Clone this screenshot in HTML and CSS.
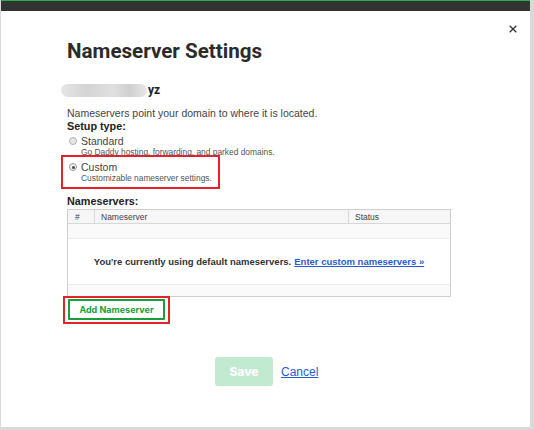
FILE: index.html
```html
<!DOCTYPE html>
<html>
<head>
<meta charset="utf-8">
<link rel="stylesheet" href="styles.css">
</head>
<body>
<div class="page">
  <div class="topbar"></div>
  <div class="modal">
    <button class="close" aria-label="Close">
      <svg width="8" height="8" viewBox="0 0 8 8"><path d="M0.7 0.7L7.3 7.3M7.3 0.7L0.7 7.3" stroke="#333" stroke-width="1.3" fill="none"/></svg>
    </button>
    <h1 class="title">Nameserver Settings</h1>
    <div class="domain"><span class="blur"></span><span class="tld">yz</span></div>
    <p class="intro">Nameservers point your domain to where it is located.</p>
    <div class="label">Setup type:</div>
    <div class="option">
      <div class="opt-row"><span class="radio"></span><span class="opt-name">Standard</span></div>
      <div class="opt-desc">Go Daddy hosting, forwarding, and parked domains.</div>
    </div>
    <div class="option highlight">
      <div class="opt-row"><span class="radio checked"></span><span class="opt-name">Custom</span></div>
      <div class="opt-desc">Customizable nameserver settings.</div>
    </div>
    <div class="label ns-label">Nameservers:</div>
    <div class="table">
      <div class="thead">
        <div class="c-num">#</div>
        <div class="c-ns">Nameserver</div>
        <div class="c-status">Status</div>
      </div>
      <div class="band"></div>
      <div class="empty">You're currently using default nameservers. <a href="#">Enter custom nameservers »</a></div>
      <div class="band bottom"></div>
    </div>
    <div class="add-wrap"><button class="add">Add Nameserver</button></div>
    <div class="actions">
      <button class="save">Save</button>
      <a href="#" class="cancel">Cancel</a>
    </div>
  </div>
</div>
</body>
</html>
```
FILE: styles.css
```css
html, body {
  margin: 0;
  padding: 0;
}
body {
  background: #d9d9d9;
  font-family: "Liberation Sans", Arial, sans-serif;
  color: #333;
}
.page {
  width: 529px;
  height: 427px;
  background: #fff;
  margin-left: 1px;
  display: flex;
  flex-direction: column;
}
.topbar {
  height: 10px;
  background: #333;
  border-top: 1px solid #27b04a;
  flex: none;
}
.modal {
  position: relative;
  flex: 1;
  padding: 25px 0 0 66px;
}
.close {
  position: absolute;
  top: 14px;
  right: 13px;
  border: 0;
  background: none;
  padding: 0;
  width: 8px;
  height: 8px;
  display: flex;
}
.title {
  margin: 0;
  font-family: Roboto, "Open Sans", sans-serif;
  font-weight: 700;
  font-size: 20.6px;
  color: #2b2b2b;
  line-height: 30px;
}
.domain {
  margin-top: 15px;
  display: flex;
  align-items: center;
  height: 18px;
  margin-left: -6px;
}
.blur {
  display: inline-block;
  width: 86px;
  height: 13px;
  border-radius: 7px;
  background: linear-gradient(90deg, #e6e6e6, #d4d4d4 30%, #e0e0e0 60%, #cfcfcf 80%, #e8e8e8);
}
.tld {
  font-family: Roboto, sans-serif;
  font-weight: 700;
  font-size: 12px;
  color: #222;
  margin-left: 1px;
}
.intro {
  margin: 8px 0 0;
  font-size: 10.5px;
  line-height: 12px;
  color: #444;
}
.label {
  font-weight: 700;
  font-size: 10.8px;
  line-height: 14px;
  color: #222;
}
.option {
  margin-top: 1px;
}
.opt-row {
  display: flex;
  align-items: center;
  height: 14px;
  padding-left: 2px;
}
.radio {
  width: 6px;
  height: 6px;
  border: 1px solid #b0b0b0;
  border-radius: 50%;
  background: #e6e6e6;
  margin-right: 4px;
  display: flex;
  align-items: center;
  justify-content: center;
}
.radio.checked {
  background: #f2f2f2;
  border-color: #999;
}
.radio.checked::after {
  content: "";
  width: 3px;
  height: 3px;
  border-radius: 50%;
  background: #444;
}
.opt-name {
  font-size: 10.5px;
  line-height: 12px;
  color: #444;
}
.opt-desc {
  font-size: 8.4px;
  color: #555;
  padding-left: 14px;
  line-height: 9px;
}
.option.highlight {
  margin: -2px 0 0 -6px;
  width: 151px;
  border: 2px solid #e5212a;
  padding: 3px 0 4px 4px;
}
.ns-label {
  margin-top: 6px;
  line-height: 13px;
}
.table {
  width: 382px;
  border: 1px solid #cfcfcf;
  margin-top: 1px;
}
.thead {
  display: flex;
  height: 14px;
  background: #f6f6f6;
  border-bottom: 1px solid #d8d8d8;
  font-size: 8.5px;
  line-height: 14px;
  color: #444;
  box-sizing: border-box;
}
.c-num {
  width: 27px;
  padding-left: 7px;
  box-sizing: border-box;
  border-right: 1px solid #d8d8d8;
}
.c-ns {
  width: 254px;
  padding-left: 6px;
  box-sizing: border-box;
  border-right: 1px solid #d8d8d8;
}
.c-status {
  padding-left: 6px;
}
.band {
  height: 14px;
  background: #fafafa;
  border-bottom: 1px solid #eee;
}
.band.bottom {
  border-bottom: 0;
  border-top: 1px solid #eee;
  height: 11px;
}
.empty {
  height: 45px;
  display: flex;
  align-items: center;
  justify-content: center;
  font-size: 9.5px;
  color: #333;
  font-weight: 600;
}
.empty a {
  color: #2a5bd7;
  margin-left: 3px;
}
.add-wrap {
  margin: -1px 0 0 -4px;
  width: 100px;
  height: 23px;
  border: 2px solid #e5212a;
  display: flex;
  padding: 1px 0 0 3px;
}
.add {
  width: 97px;
  height: 21px;
  border: 2px solid #1a9e3c;
  background: #fff;
  color: #1a9e3c;
  font-family: Inter, sans-serif;
  font-weight: 700;
  font-size: 9px;
  border-radius: 1px;
  padding: 0;
}
.actions {
  margin-top: 33px;
  margin-left: 148px;
  display: flex;
  align-items: center;
}
.save {
  width: 58px;
  height: 29px;
  border: 0;
  border-radius: 3px;
  background: #c2ead0;
  color: #fff;
  font-family: Inter, sans-serif;
  font-weight: 800;
  font-size: 12px;
  padding: 0;
}
.cancel {
  margin-left: 8px;
  color: #2a5bd7;
  font-size: 12px;
}
```
